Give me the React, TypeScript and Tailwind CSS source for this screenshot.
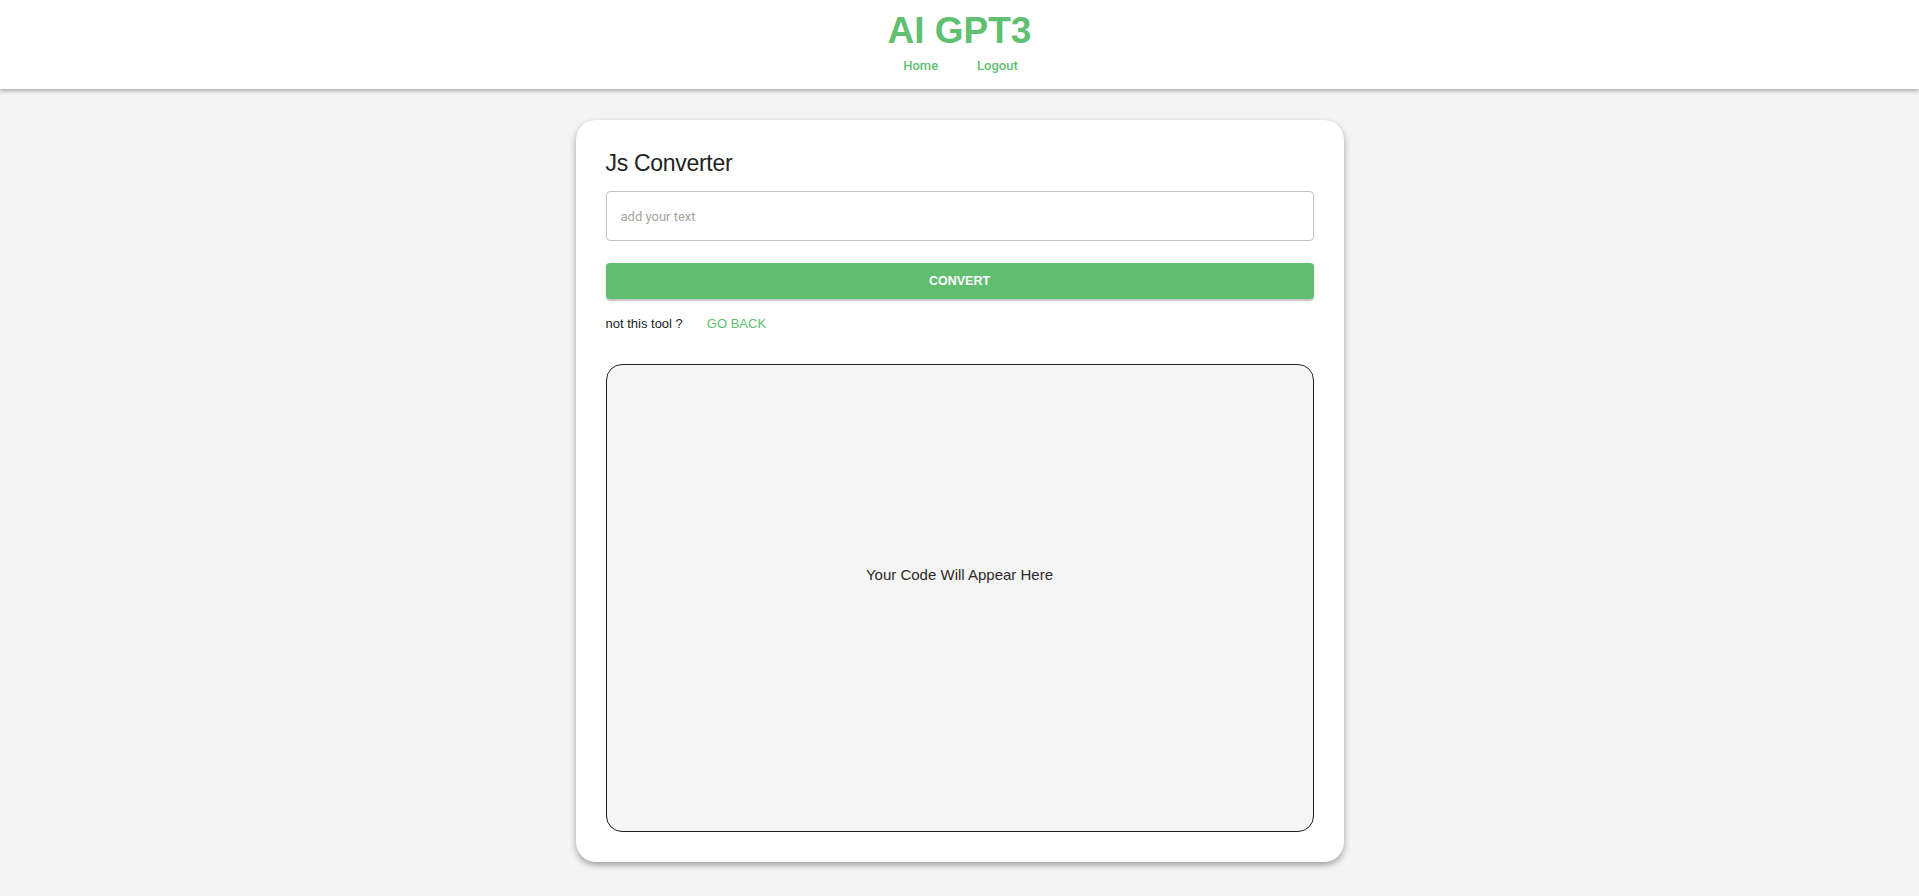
import { useState } from 'react'

export default function App() {
  const [text, setText] = useState('')

  return (
    <div className="min-h-screen bg-[#f4f4f4] font-['Roboto',sans-serif]">
      <header className="h-[89px] bg-white shadow-[0_2px_4px_rgba(0,0,0,0.3)] flex flex-col items-center relative z-10">
        <h1 className="mt-[9px] text-[37px] leading-[44px] font-bold text-[#60bf70] font-['Liberation_Sans',Arial,sans-serif]">
          AI GPT3
        </h1>
        <nav className="flex items-center gap-[39px] mt-[3px] ml-[2px]">
          <a className="text-[13px] font-medium text-[#60bf70]">Home</a>
          <a className="text-[13px] font-medium text-[#60bf70]">Logout</a>
        </nav>
      </header>

      <main className="flex justify-center pt-[31px]">
        <div className="w-[768px] h-[742px] bg-white rounded-[20px] shadow-[0_3px_6px_rgba(0,0,0,0.35)] px-[30px] pt-[27px] flex flex-col">
          <h2 className="text-[23px] leading-[32px] tracking-[-0.3px] text-[#222] font-normal font-['Liberation_Sans',Arial,sans-serif]">
            Js Converter
          </h2>

          <input
            value={text}
            onChange={(e) => setText(e.target.value)}
            placeholder="add your text"
            className="mt-[12px] h-[50px] w-full border border-[#c4c4c4] rounded-[4px] px-[14px] text-[13px] text-[#333] placeholder:text-[#a8a29e] outline-none"
          />

          <button className="mt-[22px] h-[36px] w-full bg-[#61be71] rounded-[4px] text-white text-[12.5px] font-bold shadow-[0_2px_2px_rgba(0,0,0,0.25)] font-['Liberation_Sans',Arial,sans-serif]">
            CONVERT
          </button>

          <div className="mt-[14px] flex items-center h-[22px] font-['Liberation_Sans',Arial,sans-serif]">
            <span className="text-[13px] text-[#222]">not this tool ?</span>
            <a className="ml-[24px] text-[13px] text-[#60bf70] uppercase">Go back</a>
          </div>

          <div className="mt-[29px] h-[468px] border border-[#222] rounded-[16px] bg-[#f5f5f5] flex items-center justify-center">
            <span className="text-[15px] text-[#2a2a2a] font-['Liberation_Sans',Arial,sans-serif] mb-[46px]">
              Your Code Will Appear Here
            </span>
          </div>
        </div>
      </main>
    </div>
  )
}
